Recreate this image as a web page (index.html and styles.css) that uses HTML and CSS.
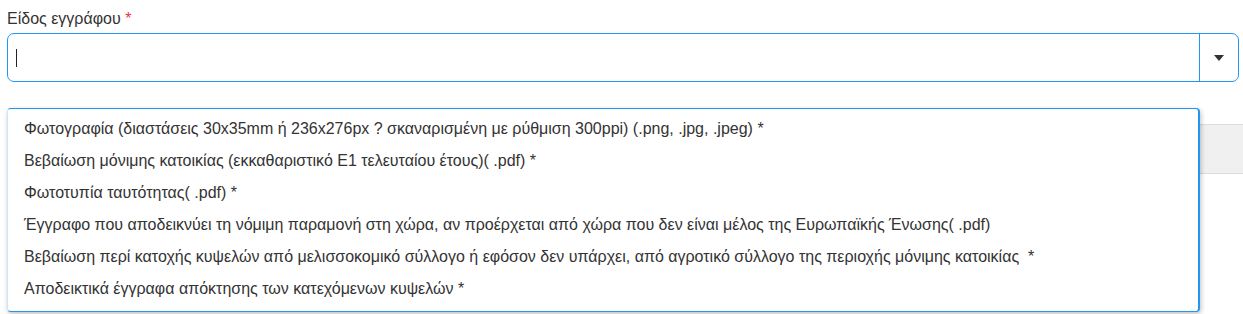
FILE: index.html
```html
<!DOCTYPE html>
<html lang="el">
<head>
    <meta charset="UTF-8">
    <title>Είδος εγγράφου</title>
    <link rel="stylesheet" href="styles.css">
</head>
<body>
    <div class="field">
        <label class="field-label">Είδος εγγράφου <span class="req">*</span></label>
        <div class="select-box">
            <div class="select-input"><span class="caret"></span></div>
            <div class="select-toggle">
                <svg width="10" height="6" viewBox="0 0 10 6"><path d="M0 0 L10 0 L5 6 Z" fill="#333"/></svg>
            </div>
        </div>
    </div>

    <!-- γκρι γραμμή πίσω από τη λίστα -->
    <div class="under-row"></div>

    <ul class="dropdown">
        <li>Φωτογραφία (διαστάσεις 30x35mm ή 236x276px ? σκαναρισμένη με ρύθμιση 300ppi) (.png, .jpg, .jpeg) *</li>
        <li>Βεβαίωση μόνιμης κατοικίας (εκκαθαριστικό Ε1 τελευταίου έτους)( .pdf) *</li>
        <li>Φωτοτυπία ταυτότητας( .pdf) *</li>
        <li>Έγγραφο που αποδεικνύει τη νόμιμη παραμονή στη χώρα, αν προέρχεται από χώρα που δεν είναι μέλος της Ευρωπαϊκής Ένωσης( .pdf)</li>
        <li>Βεβαίωση περί κατοχής κυψελών από μελισσοκομικό σύλλογο ή εφόσον δεν υπάρχει, από αγροτικό σύλλογο της περιοχής μόνιμης κατοικίας &nbsp;*</li>
        <li>Αποδεικτικά έγγραφα απόκτησης των κατεχόμενων κυψελών *</li>
    </ul>
</body>
</html>
```

FILE: styles.css
```css
body {
    margin: 0;
    font-family: "Liberation Sans", Arial, sans-serif;
    color: #333;
    background: #fff;
    position: relative;
    width: 1243px;
    height: 314px;
    overflow: hidden;
}
.field {
    padding: 10px 4px 0 7px;
}
.field-label {
    display: block;
    font-size: 16px;
    line-height: 18px;
    margin-bottom: 5px;
}
.req {
    color: #e53935;
}
.select-box {
    display: flex;
    height: 47px;
    border: 1px solid #2196f3;
    border-radius: 7px;
}
.select-input {
    flex: 1;
    display: flex;
    align-items: center;
    padding-left: 8px;
}
.caret {
    width: 1px;
    height: 18px;
    background: #222;
}
.select-toggle {
    width: 38px;
    border-left: 1px solid #2196f3;
    display: flex;
    align-items: center;
    justify-content: center;
}
.under-row {
    margin: 42px 0 0 1199px;
    height: 48px;
    background: #f0f0f0;
    border-top: 1px solid #dcdcdc;
    border-bottom: 1px solid #dcdcdc;
}
.dropdown {
    position: absolute;
    left: 7px;
    top: 108px;
    width: 1190px;
    margin: 0;
    padding: 4px 0 6px;
    list-style: none;
    background: #fff;
    border: 1px solid #2196f3;
    border-left-color: #cfe3f5;
    border-right-width: 2px;
    border-radius: 4px;
    box-shadow: 1px 2px 5px rgba(0, 0, 0, 0.25);
    font-size: 16px;
}
.dropdown li {
    padding: 0 0 0 16px;
    line-height: 32px;
    white-space: nowrap;
}
```
